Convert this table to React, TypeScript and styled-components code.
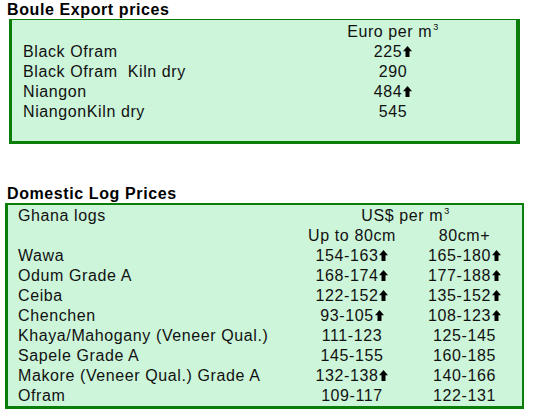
import React from "react";
import styled, {createGlobalStyle} from "styled-components";

const GlobalStyle = createGlobalStyle`
  body {
    margin: 0;
    background: #ffffff;
    font-family: "Liberation Sans", Arial, sans-serif;
    color: #111111;
  }
`;

const Page = styled.div`
  width: 534px;
  height: 420px;
  overflow: hidden;
`;

const SectionTitle = styled.div<{$top?: number}>`
  margin-top: ${props => props.$top || 0}px;
  padding-left: 7px;
  font-size: 16px;
  font-weight: 700;
  line-height: 19px;
  letter-spacing: 0.6px;
  color: #000000;
`;

const PriceBox = styled.div<{$left: number; $width: number; $cols: string; $border: string; $pad: string}>`
  box-sizing: border-box;
  margin-left: ${props => props.$left}px;
  width: ${props => props.$width}px;
  display: grid;
  grid-template-columns: ${props => props.$cols};
  grid-auto-rows: 20px;
  align-items: center;
  background: #ccf5da;
  border: solid #0b7d0b;
  border-width: ${props => props.$border};
  padding: ${props => props.$pad};
  font-size: 16px;
  line-height: 20px;
  letter-spacing: 0.6px;
`;

const Label = styled.div<{$indent: number}>`
  padding-left: ${props => props.$indent}px;
  white-space: pre;
`;

const Value = styled.div<{$span?: number; $shift?: number}>`
  grid-column: span ${props => props.$span || 1};
  text-align: center;
  white-space: nowrap;
  padding-right: ${props => props.$shift || 0}px;
`;

const Sup = styled.sup`
  font-size: 9px;
  line-height: 0;
  vertical-align: 7px;
  margin-left: 1px;
`;

const UpArrow = styled.svg`
  width: 9px;
  height: 11px;
  margin-left: 1px;
  vertical-align: baseline;
`;

function Arrow () {
  return (
    <UpArrow viewBox="0 0 9 11">
      <path d="M4.5 0 L9 5.2 L6.5 5.2 L6.5 11 L2.5 11 L2.5 5.2 L0 5.2 Z" fill="#000" />
    </UpArrow>
  );
}

function Price ({text, up}: {text: string; up?: boolean}) {
  return <>{text}{up && <Arrow />}</>;
}

const exportRows = [
  {name: "Black Ofram", price: "225", up: true},
  {name: "Black Ofram  Kiln dry", price: "290"},
  {name: "Niangon", price: "484", up: true},
  {name: "NiangonKiln dry", price: "545"},
];

const logRows = [
  {name: "Wawa", small: "154-163", smallUp: true, big: "165-180", bigUp: true},
  {name: "Odum Grade A", small: "168-174", smallUp: true, big: "177-188", bigUp: true},
  {name: "Ceiba", small: "122-152", smallUp: true, big: "135-152", bigUp: true},
  {name: "Chenchen", small: "93-105", smallUp: true, big: "108-123", bigUp: true},
  {name: "Khaya/Mahogany (Veneer Qual.)", small: "111-123", big: "125-145"},
  {name: "Sapele Grade A", small: "145-155", big: "160-185"},
  {name: "Makore (Veneer Qual.) Grade A", small: "132-138", smallUp: true, big: "140-166"},
  {name: "Ofram", small: "109-117", big: "122-131"},
];

export default function App () {
  return (
    <Page>
      <GlobalStyle />
      <SectionTitle>Boule Export prices</SectionTitle>
      <PriceBox $left={9} $width={511} $cols="321px 120px 1fr" $border="1px 4px 3px 3px" $pad="2px 0 19px 0">
        <Label $indent={11}></Label>
        <Value>Euro per m<Sup>3</Sup></Value>
        <div />
        {exportRows.map(row => (
          <React.Fragment key={row.name}>
            <Label $indent={11}>{row.name}</Label>
            <Value><Price text={row.price} up={row.up} /></Value>
            <div />
          </React.Fragment>
        ))}
      </PriceBox>

      <SectionTitle $top={40}>Domestic Log Prices</SectionTitle>
      <PriceBox $left={5} $width={519} $cols="289px 110px 1fr" $border="2px 2px 3px 3px" $pad="1px 0 0 0">
        <Label $indent={10}>Ghana logs</Label>
        <Value $span={2} $shift={8}>US$ per m<Sup>3</Sup></Value>
        <Label $indent={10}></Label>
        <Value>Up to 80cm</Value>
        <Value>80cm+</Value>
        {logRows.map(row => (
          <React.Fragment key={row.name}>
            <Label $indent={10}>{row.name}</Label>
            <Value><Price text={row.small} up={row.smallUp} /></Value>
            <Value><Price text={row.big} up={row.bigUp} /></Value>
          </React.Fragment>
        ))}
      </PriceBox>
    </Page>
  );
}
